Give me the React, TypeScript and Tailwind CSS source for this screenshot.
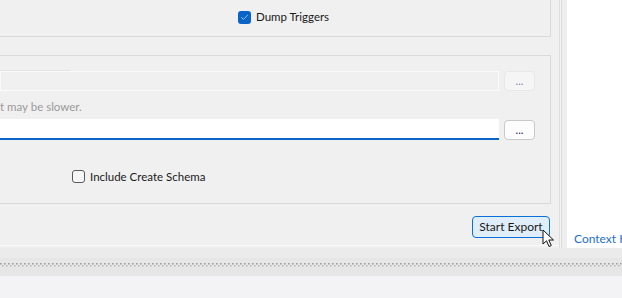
import { Check } from "lucide-react";

const font = { fontFamily: 'Lato, "Noto Sans", sans-serif' };

function Dots() {
  return (
    <svg width="100%" height="4" className="block">
      <defs>
        <pattern id="dots" width="4" height="4" patternUnits="userSpaceOnUse">
          <rect x="0" y="0" width="1.5" height="1.5" fill="#9a9a9a" />
          <rect x="2" y="2" width="1.5" height="1.5" fill="#b5b5b5" />
        </pattern>
      </defs>
      <rect width="100%" height="4" fill="url(#dots)" />
    </svg>
  );
}

function BrowseButton({ disabled }: { disabled?: boolean }) {
  return (
    <button
      className={
        "w-[31px] h-[20px] rounded-[4px] border flex items-end justify-center pb-[4px] text-[11px] leading-none " +
        (disabled
          ? "border-[#e8e8e8] bg-[#f5f5f5] text-[#8c7fb8]"
          : "border-[#c8c8c8] bg-[#fdfdfd] text-[#1a1a6a]")
      }
    >
      ...
    </button>
  );
}

export default function App() {
  return (
    <div className="w-[622px] h-[298px] overflow-hidden bg-[#f0f0f0] text-[11.5px] text-[#1a1a1a]" style={font}>
      <div className="flex h-[248px]">
        {/* left options area */}
        <div className="w-[559px] flex flex-col">
          <div className="w-[551px] h-[37px] border-r border-b border-[#d9d9d9] flex items-center pl-[238px] pb-[2px]">
            <span className="w-[13px] h-[13px] rounded-[3px] bg-[#0a63c9] flex items-center justify-center">
              <Check size={9} strokeWidth={2} className="text-[#cfe0f5]" />
            </span>
            <span className="ml-[5px]">Dump Triggers</span>
          </div>

          <div className="mt-[18px] w-[551px] h-[149px] border-t border-r border-b border-[#d9d9d9] flex flex-col">
            <div className="relative mt-[15px] flex items-center">
              <div className="absolute left-0 top-[-1px] w-[70px] h-px bg-[#e3e3e3]" />
              <div className="w-[499px] h-[20px] border border-[#fafafa] bg-[#f0f0f0]" />
              <div className="ml-[5px]">
                <BrowseButton disabled />
              </div>
            </div>
            <div className="mt-[6px] h-[20px] text-[#9a9a9a] leading-[20px]">t may be slower.</div>
            <div className="mt-[2px] flex items-center">
              <div className="w-[499px] h-[21px] bg-white border-b-2 border-[#0a63c9]" />
              <div className="ml-[5px]">
                <BrowseButton />
              </div>
            </div>
            <div className="mt-[28px] flex items-center pl-[72px]">
              <span className="w-[13px] h-[13px] rounded-[3px] border border-[#5a5a5a] bg-[#f6f6f6]" />
              <span className="ml-[5px]">Include Create Schema</span>
            </div>
          </div>

          <div className="mt-[12px] w-[550px] flex justify-end">
            <div className="relative">
              <button className="w-[78px] h-[22px] rounded-[4px] border border-[#0a6fd6] bg-[#e0eef9] text-[12px] leading-none">
                Start Export
              </button>
              <svg className="absolute left-[70px] top-[13px]" width="14" height="20" viewBox="0 0 14 20">
                <path d="M1 1 L1 15 L4.5 11.8 L7 17.5 L9.3 16.5 L6.8 11 L11.5 11 Z" fill="#fff" stroke="#111" strokeWidth="1" strokeLinejoin="round" />
              </svg>
            </div>
          </div>
          <div className="mt-auto h-[3px] border-t border-[#fafafa]" />
        </div>

        {/* splitter */}
        <div className="w-[3px] border-l border-r border-[#dedede] bg-[#f3f3f3]" />
        <div className="w-[5px] bg-[#eeeeee]" />

        {/* help panel */}
        <div className="flex-1 min-w-0 bg-white flex items-end pl-[7px] pb-[1px] overflow-hidden">
          <span className="shrink-0 whitespace-nowrap text-[#1e6fd0] text-[12px] leading-[16px]">Context Help</span>
        </div>
      </div>

      <div className="h-[10px] bg-[#ebebeb]" />
      <div className="h-[18px] bg-[#e6e6e6] pt-[5px]">
        <Dots />
      </div>
      <div className="h-[22px] bg-[#f3f3f5]" />
    </div>
  );
}
